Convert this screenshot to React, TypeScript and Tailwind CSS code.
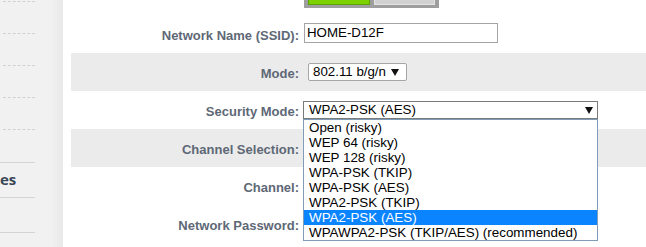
import React from "react"

const options = [
    "Open (risky)",
    "WEP 64 (risky)",
    "WEP 128 (risky)",
    "WPA-PSK (TKIP)",
    "WPA-PSK (AES)",
    "WPA2-PSK (TKIP)",
    "WPA2-PSK (AES)",
    "WPAWPA2-PSK (TKIP/AES) (recommended)",
]

function Caret() {
    return (
        <svg width="8" height="7" viewBox="0 0 8 7" className="shrink-0">
            <polygon points="0,0 8,0 4,7" fill="#111" />
        </svg>
    )
}

function Row({ label, shaded, children }: { label: string; shaded?: boolean; children?: React.ReactNode }) {
    return (
        <div className={`flex h-[38px] items-center ${shaded ? "bg-[#ebebeb]" : ""}`}>
            <div className="w-[228px] pt-[3px] text-right text-[13px] font-bold text-[#5e6876]">{label}</div>
            <div className="flex items-center pl-[5px]">{children}</div>
        </div>
    )
}

export default function App() {
    return (
        <div className="flex h-[247px] w-[646px] overflow-hidden bg-white font-['Liberation_Sans',Arial,sans-serif]">
            {/* Sidebar */}
            <div className="w-[63px] shrink-0 bg-[linear-gradient(to_right,#f1f1f1_82%,#e8e8e8)]">
                <div className="ml-[3px] w-[32px]">
                    <div className="h-[2px] border-b border-dashed border-[#d2d2d2]" />
                    <div className="h-[32px] border-b border-dashed border-[#d2d2d2]" />
                    <div className="h-[32px] border-b border-dashed border-[#d2d2d2]" />
                    <div className="h-[32px] border-b border-dashed border-[#d2d2d2]" />
                    <div className="h-[32px] border-b border-dashed border-[#d2d2d2]" />
                </div>
                <div className="w-[35px]">
                    <div className="h-[33px] border-b border-[#d4d4d4]" />
                    <div className="flex h-[35px] items-center border-b border-[#d4d4d4] pb-[1px] text-[15px] font-bold text-[#3b4756] font-['Open_Sans',sans-serif]">
                        es
                    </div>
                    <div className="h-[35px] border-b border-[#d4d4d4]" />
                </div>
            </div>

            {/* Main */}
            <div className="relative flex-1 pl-[8px]">
                <div className="h-[15px]">
                    <div className="ml-[233px] flex h-[8px] w-[135px] gap-[4px] bg-[#9e9e9e] px-[4px]">
                        <div className="h-[5px] w-[62px] border border-t-0 border-[#5aa300] bg-[#7ed100]" />
                        <div className="h-[5px] w-[62px] border border-t-0 border-[#e4e4e4] bg-[#d2d2d2]" />
                    </div>
                </div>

                <Row label="Network Name (SSID):">
                    <div className="mt-[-3px] flex h-[20px] w-[194px] items-center border border-[#a5a5a5] pl-[2px] text-[13.3px] text-black">
                        HOME-D12F
                    </div>
                </Row>
                <Row label="Mode:" shaded>
                    <div className="ml-[4px] flex h-[18px] w-[99px] items-center justify-between rounded-[2px] border border-[#a6a6a6] bg-white pl-[4px] pr-[7px] text-[13.3px] text-black">
                        802.11 b/g/n
                        <Caret />
                    </div>
                </Row>
                <Row label="Security Mode:">
                    <div className="ml-[-1px] flex h-[18px] w-[295px] items-center justify-between border border-[#7a7a7a] bg-white pl-[5px] pr-[4px] text-[13.3px] text-black">
                        WPA2-PSK (AES)
                        <Caret />
                    </div>
                </Row>
                <Row label="Channel Selection:" shaded />
                <Row label="Channel:" />
                <Row label="Network Password:" />

                {/* Open dropdown list */}
                <div className="absolute left-[240px] top-[119px] w-[295px] border border-[#7f9db9] bg-white">
                    {options.map((o) => (
                        <div
                            key={o}
                            className={`flex h-[15px] items-center pl-[5px] text-[13.4px] leading-none ${
                                o === "WPA2-PSK (AES)" ? "bg-[#0a84ff] text-white" : "text-black"
                            }`}
                        >
                            {o}
                        </div>
                    ))}
                </div>
            </div>
        </div>
    )
}
